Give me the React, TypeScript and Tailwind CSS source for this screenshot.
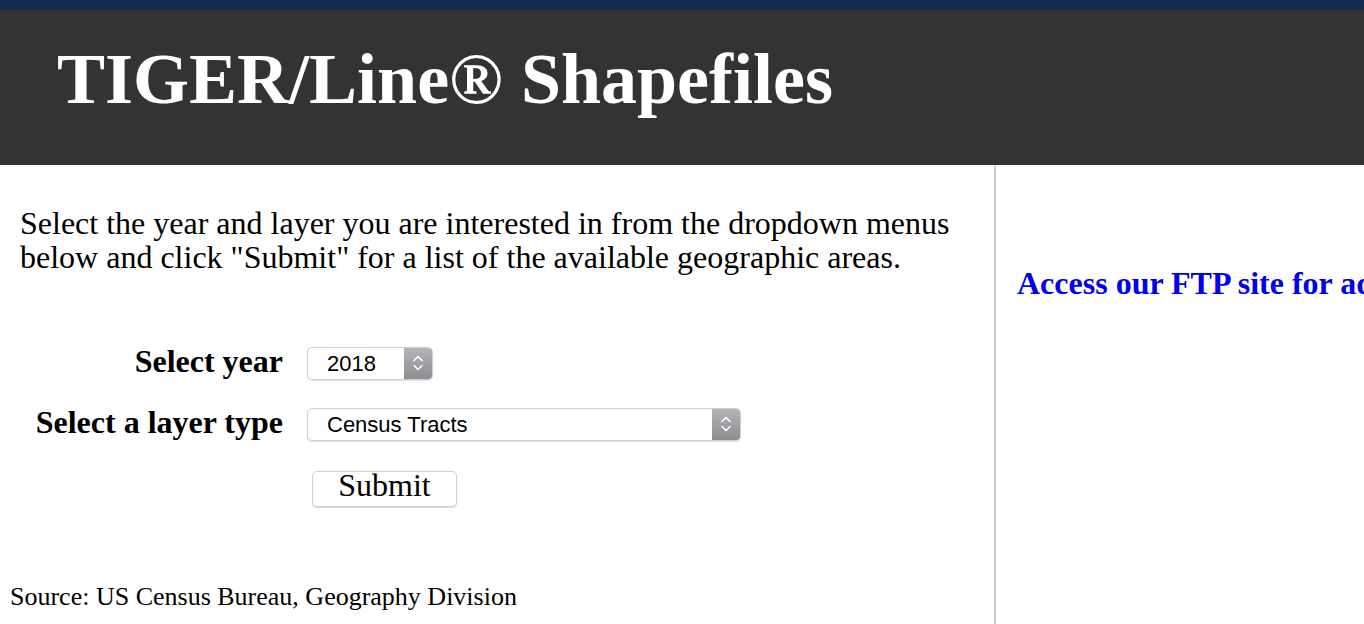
const serif = { fontFamily: '"Liberation Serif", "Times New Roman", serif' };

function Chevrons() {
  return (
    <svg width="12" height="20" viewBox="0 0 12 20" fill="none" stroke="white" strokeWidth="1.6" strokeLinecap="round" strokeLinejoin="round">
      <path d="M2 7.5 L6 3.5 L10 7.5" />
      <path d="M2 12.5 L6 16.5 L10 12.5" />
    </svg>
  );
}

function FakeSelect({ value, width }: { value: string; width: string }) {
  return (
    <div
      className={`${width} h-[33px] flex items-stretch bg-white border border-[#cfcfcf] rounded-[5px] shadow-[0_1px_1px_rgba(0,0,0,0.12)] overflow-hidden`}
    >
      <div className="flex-1 flex items-center pl-[19px] text-[22px] text-black font-['Liberation_Sans',Arial,sans-serif]">
        {value}
      </div>
      <div className="w-[28px] flex items-center justify-center bg-gradient-to-b from-[#b4b4b9] to-[#8c8c91]">
        <Chevrons />
      </div>
    </div>
  );
}

export default function App() {
  return (
    <div className="h-screen flex flex-col bg-white overflow-hidden" style={serif}>
      <div className="h-[10px] bg-[#132d51]" />
      <header className="h-[155px] bg-[#333333] pt-[29px] pl-[57px]">
        <h1 className="text-[72px] leading-[80px] font-bold text-white whitespace-nowrap">
          TIGER/Line® Shapefiles
        </h1>
      </header>

      <div className="flex-1 flex">
        <div className="w-[996px] shrink-0 border-r-2 border-[#cccccc] flex flex-col">
          <p className="mt-[41px] pl-[20px] text-[32px] leading-[34px] text-black">
            Select the year and layer you are interested in from the dropdown menus
            <br />
            below and click "Submit" for a list of the available geographic areas.
          </p>

          <div className="mt-[71px] flex flex-col">
            <div className="h-[36px] flex items-center">
              <label className="w-[283px] pb-[4px] text-right text-[32px] leading-[36px] font-bold text-black">
                Select year
              </label>
              <div className="ml-[24px]">
                <FakeSelect value="2018" width="w-[126px]" />
              </div>
            </div>
            <div className="mt-[25px] h-[36px] flex items-center">
              <label className="w-[283px] pb-[4px] text-right text-[32px] leading-[36px] font-bold text-black">
                Select a layer type
              </label>
              <div className="ml-[24px]">
                <FakeSelect value="Census Tracts" width="w-[434px]" />
              </div>
            </div>
            <div className="mt-[29px] h-[36px] flex items-center pl-[312px]">
              <button className="w-[145px] h-[36px] pb-[8px] bg-white border border-[#cfcfcf] rounded-[5px] shadow-[0_1px_1px_rgba(0,0,0,0.15)] text-[32px] leading-[26px] text-black">
                Submit
              </button>
            </div>
          </div>

          <p className="mt-[75px] pl-[10px] text-[26px] leading-[30px] text-black whitespace-nowrap">
            Source: US Census Bureau, Geography Division
          </p>
        </div>

        <div className="flex-1 overflow-hidden pl-[21px]">
          <a href="#" className="block mt-[100px] text-[32px] leading-[36px] font-bold text-[#0000ee] whitespace-nowrap">
            Access our FTP site for additional TIGER/Line® Shapefiles
          </a>
        </div>
      </div>
    </div>
  );
}
